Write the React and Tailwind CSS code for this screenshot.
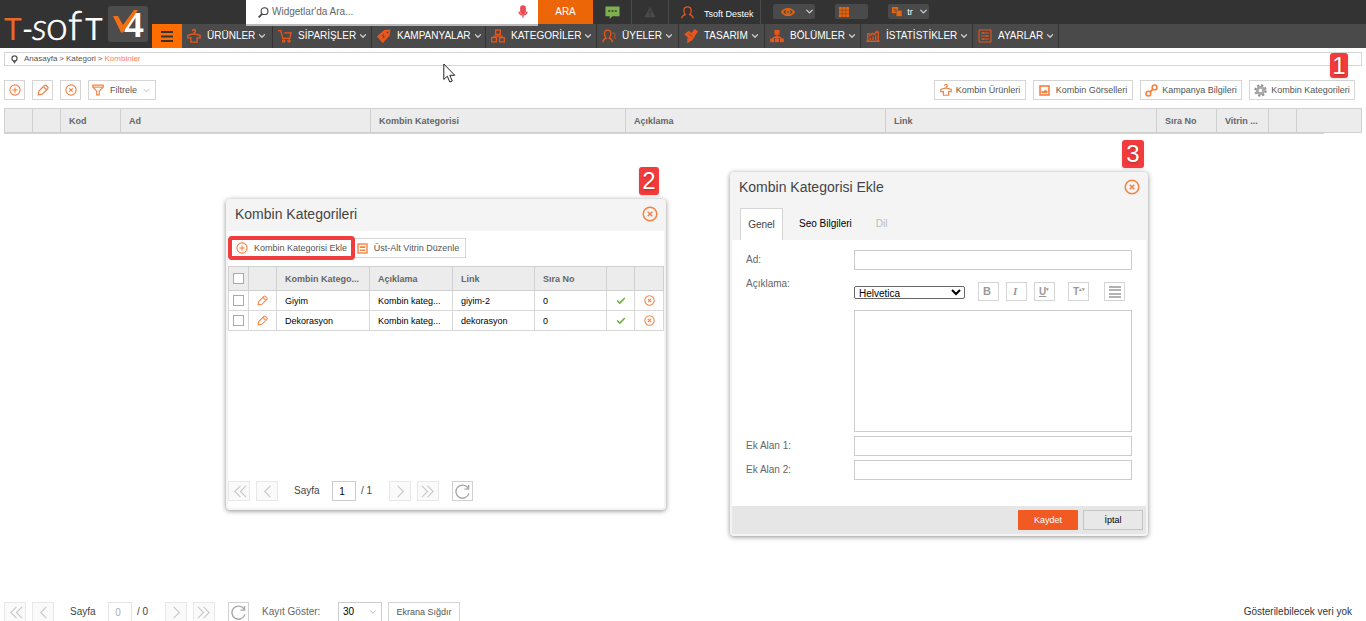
import React from 'react';
import { ChevronDown, Check } from 'lucide-react';

const ORANGE = '#f58142';

function Svg({ size = 14, color = ORANGE, className = '', children, box = 16 }) {
  return (
    <svg
      width={size}
      height={size}
      viewBox={`0 0 ${box} ${box}`}
      fill="none"
      stroke={color}
      strokeWidth="1.5"
      className={`shrink-0 ${className}`}
      aria-hidden="true"
    >
      {children}
    </svg>
  );
}

const PlusCircle = (props) => (
  <Svg {...props}>
    <circle cx="8" cy="8" r="6.8" />
    <path d="M8 4.5v7M4.5 8h7" />
  </Svg>
);

const CloseCircle = (props) => (
  <Svg {...props}>
    <circle cx="8" cy="8" r="6.8" />
    <path d="M5.7 5.7l4.6 4.6M10.3 5.7l-4.6 4.6" />
  </Svg>
);

const Pencil = (props) => (
  <Svg {...props}>
    <path d="M1.5 14.5l1-5 7.500-7.500a1.600 1.600 0 0 1 2.300 0l2 2a1.600 1.600 0 0 1 0 2.300L7 13.500zM8.500 3.500l4.500 4.500" />
  </Svg>
);

const Funnel = (props) => (
  <Svg {...props}>
    <path d="M1 1.5h14v2.500L9.700 9.500v5h-3.400v-5L1 4z" />
    <path d="M1 4.200h14" />
  </Svg>
);

const Shirt = (props) => (
  <Svg {...props}>
    <path d="M6.300 2.500a1.700 1.700 0 1 1 2 1.500L8 5.200M8 5.200L1 7.200v3h3.500V15h7v-4.800H15v-3z" />
  </Svg>
);

const Picture = (props) => (
  <Svg {...props}>
    <rect x="1.500" y="1.500" width="13" height="13" strokeWidth="2.400" />
    <path d="M3.500 12V8l2.500 1.500L9.500 7l3 2v3z" fill={ORANGE} stroke="none" />
  </Svg>
);

const Chain = (props) => (
  <Svg {...props}>
    <circle cx="4.200" cy="11.800" r="2.900" strokeWidth="2" />
    <circle cx="11.800" cy="4.200" r="2.900" strokeWidth="2" />
    <path d="M6 10l4-4" strokeWidth="2.400" />
  </Svg>
);

const Gear = (props) => (
  <Svg color="#8c8c8c" {...props}>
    <circle cx="8" cy="8" r="6.300" strokeWidth="2.600" strokeDasharray="2.600 2.350" />
    <circle cx="8" cy="8" r="4" strokeWidth="3.600" stroke="#a9a9a9" />
  </Svg>
);

const Rows = (props) => (
  <Svg {...props}>
    <rect x="1.500" y="1.500" width="13" height="13" strokeWidth="2" />
    <path d="M4 6h8M4 10.500h8" strokeWidth="2.200" />
  </Svg>
);

const Refresh = (props) => (
  <Svg color="#a8a8a8" {...props}>
    <path d="M14 4.500A7 7 0 1 0 14.800 10M14.500 1v4.500H10" />
  </Svg>
);

const arrows = {
  first: 'M9 2L3 8l6 6M15 2L9 8l6 6',
  prev: 'M11 2L5 8l6 6',
  next: 'M5 2l6 6-6 6',
  last: 'M1 2l6 6-6 6M7 2l6 6-6 6',
};

const MENU_ICON = '#e9571c';

const menu = [
  {
    label: 'ÜRÜNLER',
    width: 'w-[91px]',
    icon: <path d="M6.300 2.500a1.700 1.700 0 1 1 2 1.500L8 5.500M8 5.500L1 7.200v3h3.500V15h7v-4.800H15v-3z" />,
  },
  {
    label: 'SİPARİŞLER',
    width: 'w-[99px]',
    icon: (
      <>
        <path d="M0 1.800h3.200l2.300 9h7.800L15 4.500H7" />
        <circle cx="6.500" cy="13.800" r="1.300" />
        <circle cx="12.500" cy="13.800" r="1.300" />
      </>
    ),
  },
  {
    label: 'KAMPANYALAR',
    width: 'w-[114px]',
    icon: (
      <>
        <path d="M1 8.500L8.500 2l6-.5-.8 5.800L6.500 15z" fill={MENU_ICON} />
        <circle cx="12" cy="4" r="1" fill="#4a4a4a" stroke="none" />
        <path d="M8 6.500l-2 1 2.500 1.500-2 1.500" stroke="#4a4a4a" strokeWidth="1" />
      </>
    ),
  },
  {
    label: 'KATEGORİLER',
    width: 'w-[111px]',
    icon: <path d="M5.300 1.200h5.400v5H5.300zM.8 9.800h5.400v5H.8zM9.800 9.800h5.400v5H9.800zM8 6.500v1.700M3.500 9.500V8.200h9v1.300" />,
  },
  {
    label: 'ÜYELER',
    width: 'w-[82px]',
    icon: (
      <>
        <path d="M1 15c0-3 2-3.800 3.800-4.500C3.500 9.300 2.800 7.800 2.800 5.500c0-2.700 1.500-4.200 3.700-4.200s3.700 1.500 3.700 4.200c0 2.300-.7 3.800-2 5C10 11.200 12 12 12 15" />
        <path d="M12 4.500c2-.4 3 .5 3 2s-.6 2.300-1.300 3c.8.500 1.500.8 1.800 2" strokeWidth="1" />
      </>
    ),
  },
  {
    label: 'TASARIM',
    width: 'w-[86px]',
    icon: (
      <>
        <path d="M1.500 6l4-3 6 6-3 3.500z" fill={MENU_ICON} />
        <path d="M4.500 10.500v4.500l4-3M8 6l4.500-5 2.500 2-4 5.500z" fill={MENU_ICON} />
        <path d="M6 5.500l4 4" stroke="#4a4a4a" strokeWidth="1" />
      </>
    ),
  },
  {
    label: 'BÖLÜMLER',
    width: 'w-[96px]',
    icon: (
      <>
        <rect x="5.800" y="1.800" width="4.400" height="4" fill={MENU_ICON} />
        <rect x="1" y="11.500" width="3" height="2.800" fill={MENU_ICON} />
        <rect x="6.500" y="11.500" width="3" height="2.800" fill={MENU_ICON} />
        <rect x="12" y="11.500" width="3" height="2.800" fill={MENU_ICON} />
        <path d="M8 6v5M2.500 11l5.500-3 5.500 3" />
      </>
    ),
  },
  {
    label: 'İSTATİSTİKLER',
    width: 'w-[112px]',
    icon: (
      <>
        <path d="M2 13V5.500h3M12 3.500h2V13M.5 14h15" />
        <path d="M5 12.500V10M8 12.500V8.500M11 12.500V7.500M4 8.500L7 5l2.500 1.500L13 2" />
      </>
    ),
  },
  {
    label: 'AYARLAR',
    width: 'w-[86px]',
    icon: <path d="M1.200 1.200h13.600v13.600H1.200zM3.500 4.500h9M3.500 8h9M3.500 11.500h9M6 3.300v2.400M10.500 6.800v2.400M6 10.300v2.400" strokeWidth="1.200" />,
  },
];

function Logo() {
  return (
    <a href="#" aria-label="T-Soft V4" className="block w-[152px] shrink-0">
      <svg width="152" height="48" viewBox="0 0 152 48" className="font-['Lato',sans-serif] font-normal" fill="#fff">
        <text x="4" y="40" fontSize="30" fill="#e8682a">T</text>
        <text x="22" y="40" fontSize="30">-</text>
        <text x="32" y="40" fontSize="38" fontStyle="italic" fontWeight="300" stroke="#fff" strokeWidth=".6">s</text>
        <text x="46" y="40" fontSize="39" fontWeight="300" stroke="#fff" strokeWidth=".6">o</text>
        <text x="68" y="40" fontSize="42" fontWeight="300" stroke="#fff" strokeWidth=".6">f</text>
        <text x="85" y="40" fontSize="30">T</text>
        <rect x="108" y="6" width="40" height="36" rx="3" fill="#4c4c4c" />
        <text x="124" y="37" fontSize="35" fontWeight="700" className="font-['Liberation_Sans',sans-serif]">4</text>
        <path d="M113 16h5l5 9 11-15h4l-15 22.500h-2z" fill="#f36f12" />
      </svg>
    </a>
  );
}

function TopSelect({ label, children, width, chevron = true }) {
  return (
    <button
      type="button"
      aria-label={label}
      className={`flex h-[15px] items-center justify-between rounded-xs bg-[#4a4a4a] text-[9px] text-white ${width}`}
    >
      {children}
      {chevron && <ChevronDown size={11} color="#ccc" strokeWidth={3} />}
    </button>
  );
}

function Header() {
  return (
    <header className="flex h-12 bg-[#333]">
      <Logo />
      <div className="min-w-0 flex-1">
        <div className="flex h-6 pl-[94px]">
          <label className="relative flex h-[26px] w-[292px] items-center border-b-2 border-[#bbb] bg-white pr-2 pl-3">
            <Svg size={11} color="#444">
              <circle cx="9.500" cy="6" r="5" strokeWidth="1.600" />
              <path d="M6 10l-5 5" strokeWidth="2.500" />
            </Svg>
            <input
              type="text"
              aria-label="Ara"
              placeholder="Widgetlar'da Ara..."
              className="min-w-0 flex-1 pl-[3px] text-[10px] text-[#555] outline-none placeholder:text-[#666]"
            />
            <Svg size={14} color="#ee4a50">
              <rect x="5.500" y="1" width="5" height="8.500" rx="2.500" fill="#ee4a50" />
              <path d="M3.500 7.500c0 5 9 5 9 0M8 11.500v3" />
            </Svg>
          </label>
          <button type="button" className="h-6 w-[55px] bg-[#ec6608] text-[10px] text-white">ARA</button>
          <button type="button" aria-label="Mesajlar" className="flex w-[39px] items-center justify-center border-r border-[#4a4a4a]">
            <Svg size={15}>
              <path d="M.5 1.500h15v10.500H8l-3 3v-3H.5z" fill="#7fb04f" stroke="none" />
              <path d="M3.500 6.500h2M7 6.500h2M10.500 6.500h2" stroke="#333" strokeWidth="1.600" />
            </Svg>
          </button>
          <button type="button" aria-label="Uyarılar" className="flex w-[37px] items-center justify-center border-r border-[#4a4a4a]">
            <Svg size={12}>
              <path d="M8 1l7.500 14H.5z" fill="#4a4a4a" stroke="none" />
              <path d="M8 5.500v5M8 12v1.500" stroke="#333" />
            </Svg>
          </button>
          <a href="#" className="flex w-[92px] items-center gap-2.5 border-r border-[#4a4a4a] pl-3 text-[9px] text-white">
            <Svg size={13} color={MENU_ICON}>
              <path d="M1 15c0-3 2.500-3.800 4.300-4.500C4 9.300 3.500 7.800 3.500 5.500 3.500 2.500 5.500 1 8 1s4.500 1.500 4.500 4.500c0 2.300-.5 3.800-1.800 5C12.500 11.200 15 12 15 15" />
            </Svg>
            <span className="pt-1 whitespace-nowrap">Tsoft Destek</span>
          </a>
          <div className="flex items-start gap-5 pt-1 pl-3">
            <TopSelect label="Görünüm" width="w-[42px] pl-2">
              <svg width="14" height="10" viewBox="0 0 16 10" fill="none" stroke="#e8650f" strokeWidth="1.800" className="shrink-0">
                <path d="M1 5c3.500-5 10.500-5 14 0-3.500 5-10.500 5-14 0z" />
                <circle cx="8" cy="5" r="2" />
              </svg>
            </TopSelect>
            <TopSelect label="Widgetlar" width="w-[33px] pl-1" chevron={false}>
              <Svg size={10} box={10}>
                <path d="M0 0h10v10H0z" fill="#e8650f" stroke="none" />
                <path d="M3.300 0v10M6.700 0v10M0 3.300h10M0 6.700h10" stroke="#8a4a22" strokeWidth=".7" />
              </Svg>
            </TopSelect>
            <TopSelect label="Dil" width="w-[41px] pl-1">
              <Svg size={10}>
                <rect x="0" y="0" width="10" height="10" fill="#e8650f" stroke="none" />
                <rect x="6.500" y="5" width="9.500" height="10" fill="#e8650f" stroke="#4a4a4a" strokeWidth="1" />
                <path d="M2.500 3.500h4M4.500 3.500v4" stroke="#4a4a4a" strokeWidth="1" />
              </Svg>
              <span>tr</span>
            </TopSelect>
          </div>
        </div>
        <nav className="flex h-6 bg-[#4a4a4a]">
          <button type="button" aria-label="Menü" className="flex w-[30px] items-center justify-center bg-[#ff6c00]">
            <Svg size={14} color="#333" box={14}>
              <path d="M1 3h12M1 7.500h12M1 12h12" strokeWidth="2" />
            </Svg>
          </button>
          {menu.map((item) => (
            <a
              key={item.label}
              href="#"
              className={`flex items-center border-r border-[#333] pl-[5px] text-[10px] text-white ${item.width}`}
            >
              <Svg size={14} color={MENU_ICON} className="mr-1.5">{item.icon}</Svg>
              <span className="whitespace-nowrap">{item.label}</span>
              <ChevronDown size={10} color="#ccc" strokeWidth={3} className="ml-0.5 shrink-0" />
            </a>
          ))}
        </nav>
      </div>
    </header>
  );
}

function ToolButton({ icon, children, className = '', ...rest }) {
  return (
    <button
      type="button"
      className={`flex h-5 items-center justify-center border border-[#d5d5d5] bg-white text-[9px] whitespace-nowrap text-[#555] ${className}`}
      {...rest}
    >
      {icon}
      {children}
    </button>
  );
}

function HeadCell({ children }) {
  return (
    <th className="truncate border border-[#d0d0d0] px-2 text-left font-bold text-[#666]">{children}</th>
  );
}

const mainColumns = [
  ['w-[28px]', ''],
  ['w-[28px]', ''],
  ['w-[60px]', 'Kod'],
  ['w-[250px]', 'Ad'],
  ['w-[255px]', 'Kombin Kategorisi'],
  ['w-[260px]', 'Açıklama'],
  ['', 'Link'],
  ['w-[60px]', 'Sıra No'],
  ['w-[52px]', 'Vitrin ...'],
  ['w-[28px]', ''],
  ['w-[65px]', ''],
];

function MainTable() {
  return (
    <div className="mx-1 mt-2">
      <table className="w-full table-fixed border-collapse text-[9px]">
        <colgroup>
          {mainColumns.map(([width], i) => <col key={i} className={width} />)}
        </colgroup>
        <thead>
          <tr className="h-6 bg-[#ececec]">
            {mainColumns.map(([, title], i) => <HeadCell key={i}>{title}</HeadCell>)}
          </tr>
        </thead>
      </table>
      <div className="mr-[38px] h-px bg-[#d5d5d5]" />
    </div>
  );
}

function PageButton({ label, arrow, className = '' }) {
  return (
    <button
      type="button"
      aria-label={label}
      className={`flex h-5 w-[22px] items-center justify-center border border-[#e8e8e8] bg-[#fafafa] ${className}`}
    >
      <Svg size={15} color="#c8c8c8">
        <path d={arrows[arrow]} strokeWidth="1.200" />
      </Svg>
    </button>
  );
}

function Pager({ page, total, disabled, children }) {
  return (
    <div className="flex items-center text-[10px] text-[#444]">
      <PageButton label="İlk sayfa" arrow="first" />
      <PageButton label="Önceki sayfa" arrow="prev" className="ml-1.5" />
      <label className="flex items-center">
        <span className="w-[54px] pl-4">Sayfa</span>
        <input
          type="text"
          defaultValue={page}
          disabled={disabled}
          className="h-5 w-6 border border-[#ccc] pr-1 text-center text-[10px] text-black disabled:border-[#e4e4e4] disabled:text-[#aaa]"
        />
      </label>
      <span className="w-[33px] pl-[5px]">/ {total}</span>
      <PageButton label="Sonraki sayfa" arrow="next" />
      <PageButton label="Son sayfa" arrow="last" className="ml-1.5" />
      <button type="button" aria-label="Yenile" className="ml-[13px] flex h-5 w-[21px] items-center justify-center border border-[#d0d0d0]">
        <Refresh size={15} />
      </button>
      {children}
    </div>
  );
}

function StepBadge({ children, className }) {
  return (
    <span
      className={`absolute flex items-center justify-center rounded-[3px] bg-[#f23b3c] text-2xl leading-none text-white shadow-sm text-shadow-md ${className}`}
    >
      {children}
    </span>
  );
}

function DialogTitle({ children }) {
  return (
    <div className="flex h-[30px] items-center justify-between pr-1.5 pb-1 pl-[7px]">
      <h2 className="text-[14px] text-[#444]">{children}</h2>
      <button type="button" aria-label="Kapat">
        <CloseCircle size={16} />
      </button>
    </div>
  );
}

const categories = [
  { name: 'Giyim', description: 'Kombin kateg...', link: 'giyim-2', order: 0 },
  { name: 'Dekorasyon', description: 'Kombin kateg...', link: 'dekorasyon', order: 0 },
];

const tick = 'block size-[11px] appearance-none border border-[#aaa] bg-white mx-auto';

function CategoriesDialog() {
  return (
    <section className="absolute top-[199px] left-[226px] flex h-[311px] w-[440px] flex-col rounded-sm border-2 border-[#f4f4f4] bg-white shadow-[0_1px_5px_rgba(0,0,0,0.45)]">
      <div className="bg-[#f4f4f4]">
        <DialogTitle>Kombin Kategorileri</DialogTitle>
      </div>
      <div className="mt-[5px] flex items-center">
        <ToolButton
          icon={<PlusCircle size={12} className="mr-1.5" />}
          className="h-[24px]! w-[127px] rounded-sm border-4! border-[#f23b3c]!"
        >
          Kombin Kategorisi Ekle
        </ToolButton>
        <ToolButton icon={<Rows size={11} className="mr-1.5" />} className="w-[111px] border-l-0 pr-1">
          Üst-Alt Vitrin Düzenle
        </ToolButton>
      </div>
      <table className="mt-[6px] w-full table-fixed border-collapse text-[9px] text-black">
        <colgroup>
          <col className="w-[20px]" />
          <col className="w-[28px]" />
          <col className="w-[93px]" />
          <col className="w-[83px]" />
          <col className="w-[82px]" />
          <col className="w-[72px]" />
          <col className="w-[28px]" />
          <col />
        </colgroup>
        <thead>
          <tr className="h-6 bg-[#ececec]">
            <th className="border border-[#d0d0d0]">
              <input type="checkbox" aria-label="Tümünü seç" className={tick} />
            </th>
            <HeadCell />
            <HeadCell>Kombin Katego...</HeadCell>
            <HeadCell>Açıklama</HeadCell>
            <HeadCell>Link</HeadCell>
            <HeadCell>Sıra No</HeadCell>
            <HeadCell />
            <HeadCell />
          </tr>
        </thead>
        <tbody>
          {categories.map((cat) => (
            <tr key={cat.name} className="h-5">
              <td className="border border-[#d8d8d8]">
                <input type="checkbox" aria-label={cat.name} className={tick} />
              </td>
              <td className="border border-[#d8d8d8]">
                <button type="button" aria-label="Düzenle" className="mx-auto block">
                  <Pencil size={11} />
                </button>
              </td>
              <td className="truncate border border-[#d8d8d8] px-2">{cat.name}</td>
              <td className="truncate border border-[#d8d8d8] px-2">{cat.description}</td>
              <td className="truncate border border-[#d8d8d8] px-2">{cat.link}</td>
              <td className="truncate border border-[#d8d8d8] px-2">{cat.order}</td>
              <td className="border border-[#d8d8d8]">
                <Check size={10} strokeWidth={4} color="#72b043" className="mx-auto" />
              </td>
              <td className="border border-[#d8d8d8]">
                <button type="button" aria-label="Sil" className="mx-auto block">
                  <CloseCircle size={11} />
                </button>
              </td>
            </tr>
          ))}
        </tbody>
      </table>
      <div className="mt-auto mb-[7px]">
        <Pager page="1" total="1" />
      </div>
    </section>
  );
}

function FormRow({ label, id, children }) {
  return (
    <div className="flex">
      <label htmlFor={id} className="w-[108px] shrink-0 pt-[3px] text-[10px] text-[#666]">{label}</label>
      <div className="flex-1">{children}</div>
    </div>
  );
}

const field = 'block h-5 w-full border border-[#ccc] bg-white px-1 text-[10px]';
const editorButton =
  'flex h-[19px] w-[21px] items-center border border-[#d5d5d5] pl-1 text-[11px] leading-none font-bold text-[#999]';

function AddCategoryDialog() {
  return (
    <section className="absolute top-[172px] left-[730px] w-[418px] rounded-sm border-2 border-[#f4f4f4] bg-white shadow-[0_1px_5px_rgba(0,0,0,0.45)]">
      <div className="bg-[#f4f4f4]">
        <DialogTitle>Kombin Kategorisi Ekle</DialogTitle>
        <div role="tablist" className="flex h-9 items-end pl-2 text-[10px]">
          <button type="button" role="tab" aria-selected="true" className="h-8 w-[43px] border border-b-0 border-[#d5d5d5] bg-white text-[#444]">
            Genel
          </button>
          <button type="button" role="tab" className="ml-4 h-8 text-black">Seo Bilgileri</button>
          <button type="button" role="tab" className="ml-6 h-8 text-[#bbb]">Dil</button>
        </div>
      </div>
      <form className="flex flex-col gap-1 pt-2.5 pr-3.5 pb-[26px] pl-3.5">
        <FormRow label="Ad:" id="ad">
          <input id="ad" type="text" className={field} />
        </FormRow>
        <FormRow label="Açıklama:" id="aciklama">
          <div className="flex h-9 items-start pt-2">
            <select aria-label="Yazı tipi" className="mt-1 h-[13px] w-[111px] rounded-xs border border-[#666] bg-white text-[10px] leading-none text-black">
              <option>Helvetica</option>
            </select>
            <button type="button" className={`ml-[13px] ${editorButton}`}>B</button>
            <button type="button" className={`ml-[7px] ${editorButton}`}>
              <span className="pl-0.5 font-['Liberation_Serif',serif] italic">I</span>
            </button>
            <button type="button" className={`ml-[7px] ${editorButton}`}>
              <span className="text-[10px] underline">U</span>
              <sup className="text-[5px]">▾</sup>
            </button>
            <button type="button" className={`ml-[13px] ${editorButton}`}>
              <span className="text-[10px]">T</span>
              <sup className="text-[5px]">▴▾</sup>
            </button>
            <button type="button" aria-label="Hizala" className={`ml-[15px] ${editorButton}`}>
              <Svg size={12} color="#999" box={12}>
                <path d="M0 1h12M0 4h12M0 8h12M0 11h12" strokeWidth="1.600" />
              </Svg>
            </button>
          </div>
          <textarea id="aciklama" className="block h-[122px] w-full resize-none border border-[#ccc] bg-white p-1 text-[10px]" />
        </FormRow>
        <FormRow label="Ek Alan 1:" id="ek1">
          <input id="ek1" type="text" className={field} />
        </FormRow>
        <FormRow label="Ek Alan 2:" id="ek2">
          <input id="ek2" type="text" className={field} />
        </FormRow>
      </form>
      <div className="flex h-7 items-center justify-end gap-[5px] bg-[#e6e6e6] pr-[3px] text-[9px]">
        <button type="button" className="h-5 w-[60px] rounded-[1px] bg-[#f15a22] text-white">Kaydet</button>
        <button type="button" className="h-5 w-[60px] border border-[#c4c4c4] bg-[#e8e8e8] text-black">İptal</button>
      </div>
    </section>
  );
}

function App() {
  return (
    <div className="relative flex h-screen flex-col overflow-hidden bg-white font-['Liberation_Sans',Arial,sans-serif] leading-[14px]">
      <Header />

      <div className="mx-1 mt-1 flex h-[14px] items-center border border-[#d5d5d5] pl-[5px] text-[8px] text-[#555]">
        <Svg size={9} color="#555" className="mr-[5px]">
          <circle cx="8" cy="6" r="4.500" strokeWidth="2.200" />
          <path d="M5 10h6l-3 6z" fill="#555" stroke="none" />
        </Svg>
        <a href="#">Anasayfa</a>
        <span className="px-0.5">&gt;</span>
        <a href="#">Kategori</a>
        <span className="px-0.5">&gt;</span>
        <a href="#" className="text-[#ff7f5c]">Kombinler</a>
      </div>

      <div className="mt-3.5 flex items-center gap-[7px] pr-[11px] pl-1">
        <ToolButton className="w-[21px]" aria-label="Ekle" icon={<PlusCircle size={12} />} />
        <ToolButton className="w-[21px]" aria-label="Düzenle" icon={<Pencil size={12} />} />
        <ToolButton className="w-[21px]" aria-label="Sil" icon={<CloseCircle size={12} />} />
        <ToolButton className="w-[68px]" icon={<Funnel size={12} className="mr-1.5" />}>
          Filtrele
          <ChevronDown size={11} color="#bbb" className="ml-1" />
        </ToolButton>
        <div className="flex-1" />
        <ToolButton className="w-[92px]" icon={<Shirt size={12} className="mr-1" />}>Kombin Ürünleri</ToolButton>
        <ToolButton className="w-[100px]" icon={<Picture size={11} className="mr-1.5" />}>Kombin Görselleri</ToolButton>
        <ToolButton className="w-[102px]" icon={<Chain size={13} className="mr-1" />}>Kampanya Bilgileri</ToolButton>
        <ToolButton className="w-[106px]" icon={<Gear size={13} className="mr-1" />}>Kombin Kategorileri</ToolButton>
      </div>

      <MainTable />

      <footer className="mt-auto -mb-px flex items-center justify-between pr-3.5 pl-1">
        <Pager page="0" total="0" disabled>
          <label className="ml-[13px] flex items-center">
            <span className="w-[76px] text-[#666]">Kayıt Göster:</span>
            <span className="relative flex items-center">
              <select className="h-5 w-11 appearance-none border border-[#ccc] bg-white pl-1 text-[10px] text-black">
                <option>30</option>
              </select>
              <ChevronDown size={10} color="#aaa" className="pointer-events-none absolute right-1" />
            </span>
          </label>
          <ToolButton className="ml-1.5 w-[72px]">Ekrana Sığdır</ToolButton>
        </Pager>
        <span className="text-[10px] text-[#333]">Gösterilebilecek veri yok</span>
      </footer>

      <CategoriesDialog />
      <AddCategoryDialog />

      <StepBadge className="top-[53px] right-[18px] h-[25px] w-[18px]">1</StepBadge>
      <StepBadge className="top-[167px] left-[639px] h-7 w-5">2</StepBadge>
      <StepBadge className="top-[140px] left-[1122px] h-7 w-[22px]">3</StepBadge>

      {/* mouse pointer */}
      <svg width="13" height="20" viewBox="0 0 13 20" className="absolute top-[63px] left-[443px]" fill="#fff" stroke="#222">
        <path d="M.8 1v15.500l3.500-3.300 2.500 5.800 2.500-1-2.500-5.700h5z" />
      </svg>
    </div>
  );
}

export default App;
